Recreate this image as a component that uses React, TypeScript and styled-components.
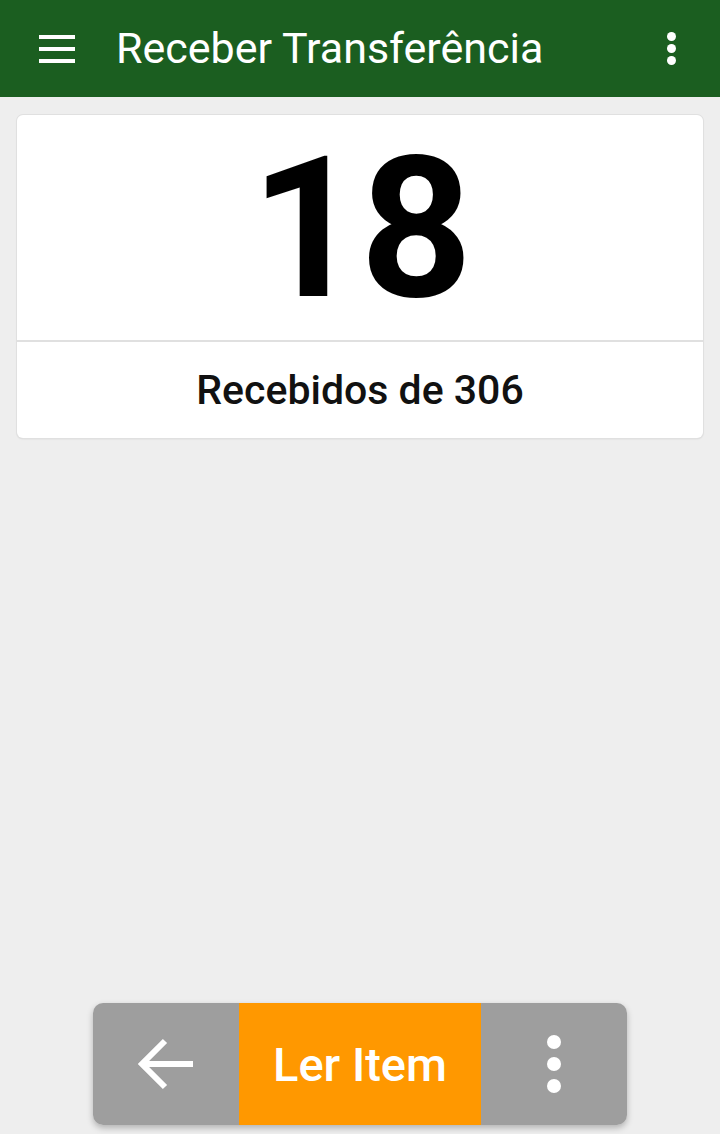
import styled, { createGlobalStyle } from 'styled-components'

const GlobalStyle = createGlobalStyle`
  html, body {
    margin: 0;
    padding: 0;
    background: #eeeeee;
    font-family: Roboto, 'Liberation Sans', sans-serif;
  }
`

const Screen = styled.div`
  width: 720px;
  height: 1134px;
  display: flex;
  flex-direction: column;
  background: #eeeeee;
  overflow: hidden;
`

const AppBar = styled.header`
  height: 97px;
  background: #1b5e20;
  display: flex;
  align-items: center;
  padding: 0 44px 0 38px;
  color: #ffffff;
  flex-shrink: 0;
`

const Title = styled.h1`
  flex: 1;
  margin: 0 0 0 40px;
  font-size: 43px;
  font-weight: 400;
  line-height: 1;
`

const Content = styled.main`
  flex: 1;
  padding: 18px 17px 0;
`

const Card = styled.section`
  background: #ffffff;
  border-radius: 6px;
  box-shadow: 0 0 0 1px #e0e0e0, 0 1px 2px rgba(0, 0, 0, 0.12);
  display: flex;
  flex-direction: column;
`

const CountArea = styled.div`
  height: 225px;
  display: flex;
  align-items: center;
  justify-content: center;
  border-bottom: 2px solid #e0e0e0;
`

const Count = styled.span`
  font-size: 196px;
  font-weight: 700;
  color: #000000;
  line-height: 1;
  letter-spacing: -3px;
  margin-top: 2px;
`

const Caption = styled.div`
  height: 96px;
  display: flex;
  align-items: center;
  justify-content: center;
  font-size: 41px;
  font-weight: 500;
  color: #111111;
`

const BottomArea = styled.footer`
  display: flex;
  justify-content: center;
  padding-bottom: 9px;
`

const ActionBar = styled.div`
  width: 534px;
  height: 122px;
  display: flex;
  border-radius: 10px;
  overflow: hidden;
  box-shadow: 0 3px 6px rgba(0, 0, 0, 0.25);
`

const SideButton = styled.button`
  width: 146px;
  border: none;
  background: #9e9e9e;
  display: flex;
  align-items: center;
  justify-content: center;
  padding: 0;
`

const MainButton = styled.button`
  flex: 1;
  border: none;
  background: #ff9800;
  color: #ffffff;
  font-family: Roboto, 'Liberation Sans', sans-serif;
  font-size: 47px;
  font-weight: 500;
  padding: 0;
`

const IconButton = styled.span`
  display: flex;
  align-items: center;
  justify-content: center;
`

const MenuIcon = () => (
  <svg width="38" height="28" viewBox="0 0 38 28">
    <rect x="1" y="0" width="36" height="4" fill="#fff" />
    <rect x="1" y="12" width="36" height="4" fill="#fff" />
    <rect x="1" y="24" width="36" height="4" fill="#fff" />
  </svg>
)

const Kebab = ({ size, gap }: { size: number; gap: number }) => (
  <svg width={size} height={size * 3 + gap * 2} viewBox={`0 0 ${size} ${size * 3 + gap * 2}`}>
    {[0, 1, 2].map((i) => (
      <circle key={i} cx={size / 2} cy={size / 2 + i * (size + gap)} r={size / 2} fill="#fff" />
    ))}
  </svg>
)

const ArrowIcon = () => (
  <svg width="60" height="56" viewBox="0 0 60 56">
    <path d="M57 28H7M29 5L6 28l23 23" stroke="#fff" strokeWidth="6" fill="none" />
  </svg>
)

const App = () => (
  <Screen>
    <GlobalStyle />
    <AppBar>
      <IconButton>
        <MenuIcon />
      </IconButton>
      <Title>Receber Transferência</Title>
      <IconButton>
        <Kebab size={9} gap={3} />
      </IconButton>
    </AppBar>
    <Content>
      <Card>
        <CountArea>
          <Count>18</Count>
        </CountArea>
        <Caption>Recebidos de 306</Caption>
      </Card>
    </Content>
    <BottomArea>
      <ActionBar>
        <SideButton aria-label="Voltar">
          <ArrowIcon />
        </SideButton>
        <MainButton>Ler Item</MainButton>
        <SideButton aria-label="Mais">
          <Kebab size={14} gap={8} />
        </SideButton>
      </ActionBar>
    </BottomArea>
  </Screen>
)

export default App
